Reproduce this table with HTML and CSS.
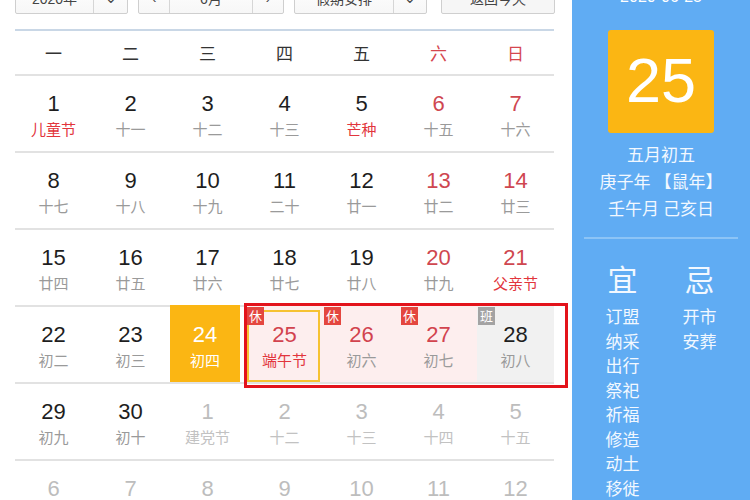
FILE: index.html
```html
<!DOCTYPE html>
<html lang="zh-CN">
<head>
<meta charset="utf-8">
<link rel="stylesheet" href="styles.css">
</head>
<body>
<div class="page">
  <div class="main">
    <div class="toolbar">
      <div class="box year"><span class="bx-text">2020年</span><span class="bx-arrow">⌄</span></div>
      <div class="box month"><span class="bx-nav">‹</span><span class="bx-text mid">6月</span><span class="bx-nav">›</span></div>
      <div class="box holiday"><span class="bx-text">假期安排</span><span class="bx-arrow">⌄</span></div>
      <div class="box btn">返回今天</div>
    </div>
    <div class="rule"></div>
    <div class="week">
      <div>一</div><div>二</div><div>三</div><div>四</div><div>五</div><div class="red">六</div><div class="red">日</div>
    </div>
    <div class="row">
      <div class="cell"><b>1</b><i class="fest">儿童节</i></div>
      <div class="cell"><b>2</b><i>十一</i></div>
      <div class="cell"><b>3</b><i>十二</i></div>
      <div class="cell"><b>4</b><i>十三</i></div>
      <div class="cell"><b>5</b><i class="fest">芒种</i></div>
      <div class="cell we"><b>6</b><i>十五</i></div>
      <div class="cell we"><b>7</b><i>十六</i></div>
    </div>
    <div class="row">
      <div class="cell"><b>8</b><i>十七</i></div>
      <div class="cell"><b>9</b><i>十八</i></div>
      <div class="cell"><b>10</b><i>十九</i></div>
      <div class="cell"><b>11</b><i>二十</i></div>
      <div class="cell"><b>12</b><i>廿一</i></div>
      <div class="cell we"><b>13</b><i>廿二</i></div>
      <div class="cell we"><b>14</b><i>廿三</i></div>
    </div>
    <div class="row">
      <div class="cell"><b>15</b><i>廿四</i></div>
      <div class="cell"><b>16</b><i>廿五</i></div>
      <div class="cell"><b>17</b><i>廿六</i></div>
      <div class="cell"><b>18</b><i>廿七</i></div>
      <div class="cell"><b>19</b><i>廿八</i></div>
      <div class="cell we"><b>20</b><i>廿九</i></div>
      <div class="cell we"><b>21</b><i class="fest">父亲节</i></div>
    </div>
    <div class="row">
      <div class="cell"><b>22</b><i>初二</i></div>
      <div class="cell"><b>23</b><i>初三</i></div>
      <div class="cell today"><b>24</b><i>初四</i></div>
      <div class="cell rest sel"><span class="badge">休</span><b>25</b><i class="fest">端午节</i></div>
      <div class="cell rest"><span class="badge">休</span><b>26</b><i>初六</i></div>
      <div class="cell rest"><span class="badge">休</span><b>27</b><i>初七</i></div>
      <div class="cell work"><span class="badge gray">班</span><b>28</b><i>初八</i></div>
    </div>
    <div class="row">
      <div class="cell"><b>29</b><i>初九</i></div>
      <div class="cell"><b>30</b><i>初十</i></div>
      <div class="cell other"><b>1</b><i>建党节</i></div>
      <div class="cell other"><b>2</b><i>十二</i></div>
      <div class="cell other"><b>3</b><i>十三</i></div>
      <div class="cell other"><b>4</b><i>十四</i></div>
      <div class="cell other"><b>5</b><i>十五</i></div>
    </div>
    <div class="row">
      <div class="cell other"><b>6</b><i>十六</i></div>
      <div class="cell other"><b>7</b><i>十七</i></div>
      <div class="cell other"><b>8</b><i>十八</i></div>
      <div class="cell other"><b>9</b><i>十九</i></div>
      <div class="cell other"><b>10</b><i>二十</i></div>
      <div class="cell other"><b>11</b><i>廿一</i></div>
      <div class="cell other"><b>12</b><i>廿二</i></div>
    </div>
    <div class="frame"></div>
  </div>
  <div class="side">
    <div class="date">2020-06-25</div>
    <div class="bigday">25</div>
    <div class="lunar">
      <div>五月初五</div>
      <div>庚子年 【鼠年】</div>
      <div>壬午月 己亥日</div>
    </div>
    <div class="sep"></div>
    <div class="yiji">
      <div class="col">
        <div class="head">宜</div>
        <div>订盟</div><div>纳采</div><div>出行</div><div>祭祀</div><div>祈福</div><div>修造</div><div>动土</div><div>移徙</div>
      </div>
      <div class="col">
        <div class="head">忌</div>
        <div>开市</div><div>安葬</div>
      </div>
    </div>
  </div>
</div>
</body>
</html>
```

FILE: styles.css
```css
* { box-sizing: border-box; }
html, body { margin: 0; padding: 0; background: #fff; }
body {
  width: 750px; height: 500px; overflow: hidden;
  font-family: "Liberation Sans", "Noto Sans CJK SC", sans-serif;
  color: #222;
}
.page { display: flex; height: 500px; }
.main { position: relative; width: 572px; padding-left: 15px; flex: none; }

.toolbar { display: flex; height: 14px; }
.box {
  margin-top: -18px; height: 32px;
  border: 1px solid #cfcfcf; border-radius: 2px;
  background: linear-gradient(#fff, #f7f7f7);
  display: flex; align-items: stretch;
  font-size: 14px; color: #444;
}
.box span { display: flex; align-items: center; justify-content: center; }
.year { width: 113px; }
.year .bx-text { width: 78px; border-right: 1px solid #d6d6d6; }
.year .bx-arrow { flex: 1; }
.month { width: 146px; margin-left: 10px; }
.month .bx-nav { width: 30px; }
.month .mid { flex: 1; border-left: 1px solid #d6d6d6; border-right: 1px solid #d6d6d6; }
.holiday { width: 133px; margin-left: 10px; }
.holiday .bx-text { width: 99px; border-right: 1px solid #d6d6d6; }
.holiday .bx-arrow { flex: 1; }
.btn { width: 114px; margin-left: 14px; justify-content: center; align-items: center; background: #f6f6f6; }

.rule { width: 539px; height: 2px; margin-top: 15px; background: #c9d7e6; }

.week {
  width: 539px; height: 45px;
  display: grid; grid-template-columns: repeat(7, 77px);
  align-items: center; text-align: center;
  font-size: 17px; color: #333;
  border-bottom: 2px solid #e2e2e2;
  font-family: "Noto Sans CJK SC", sans-serif;
}
.week .red { color: #d5474f; }

.row {
  width: 539px; height: 77px;
  display: grid; grid-template-columns: repeat(7, 77px);
  border-bottom: 2px solid #e2e2e2;
}
.cell {
  position: relative;
  display: flex; flex-direction: column; align-items: center;
  padding-top: 16px;
}
.cell b { font-weight: normal; font-size: 22px; line-height: 24px; color: #1e1e1e; }
.cell i { font-style: normal; font-size: 15px; line-height: 18px; margin-top: 4px; color: #9a9a9a; font-family: "Noto Sans CJK SC", sans-serif; }
.cell i.fest { color: #e2353c; }
.cell.we b { color: #cf4750; }
.cell.other b { color: #bdbdbd; }
.cell.other i { color: #c2c2c2; }

.cell.today { background: #fbb613; margin: -2px 6px 0 1px; padding-top: 18px; }
.cell.today b, .cell.today i { color: #fff; }
.cell.rest, .cell.work { margin-top: -2px; padding-top: 18px; }
.cell.rest { background: #fdeeee; }
.cell.rest b { color: #d2434e; }
.cell.work { background: #f1f1f1; }
.cell.sel::after {
  content: ""; position: absolute;
  left: 1px; right: 3px; top: 5px; bottom: 0;
  border: 2px solid #f6c232;
}
.badge {
  position: absolute; left: 1px; top: 2px; z-index: 1;
  width: 17px; height: 18px;
  background: #e4463f; color: #fff;
  font-size: 13px; line-height: 18px; text-align: center;
  font-family: "Noto Sans CJK SC", sans-serif;
}
.badge.gray { background: #a3a3a3; }

.frame {
  position: absolute; left: 244px; top: 303px;
  width: 324px; height: 85px;
  border: 3px solid #e3131b;
}

.side {
  flex: 1; background: #60acf3; color: #f2f8ff;
  padding: 0 12px;
  font-family: "Noto Sans CJK SC", sans-serif;
  display: flex; flex-direction: column; align-items: center;
}
.date { margin-top: -12px; height: 18px; font-size: 16px; line-height: 18px; font-family: "Liberation Sans", sans-serif; color: #fff; }
.bigday {
  margin-top: 24px; width: 106px; height: 106px;
  background: #fbb613; border-radius: 3px;
  color: #fff; font-size: 63px; line-height: 100px; text-align: center;
  font-family: "Liberation Sans", sans-serif;
}
.lunar { margin-top: 7px; font-size: 17px; line-height: 27px; text-align: center; }
.sep { margin-top: 16px; width: 154px; height: 2px; background: #8cc4f6; }
.yiji { width: 154px; display: flex; margin-top: 21px; }
.col { width: 77px; display: flex; flex-direction: column; align-items: center; font-size: 17px; line-height: 24.5px; }
.col .head { font-size: 30px; line-height: 36px; margin-bottom: 8px; }
```
